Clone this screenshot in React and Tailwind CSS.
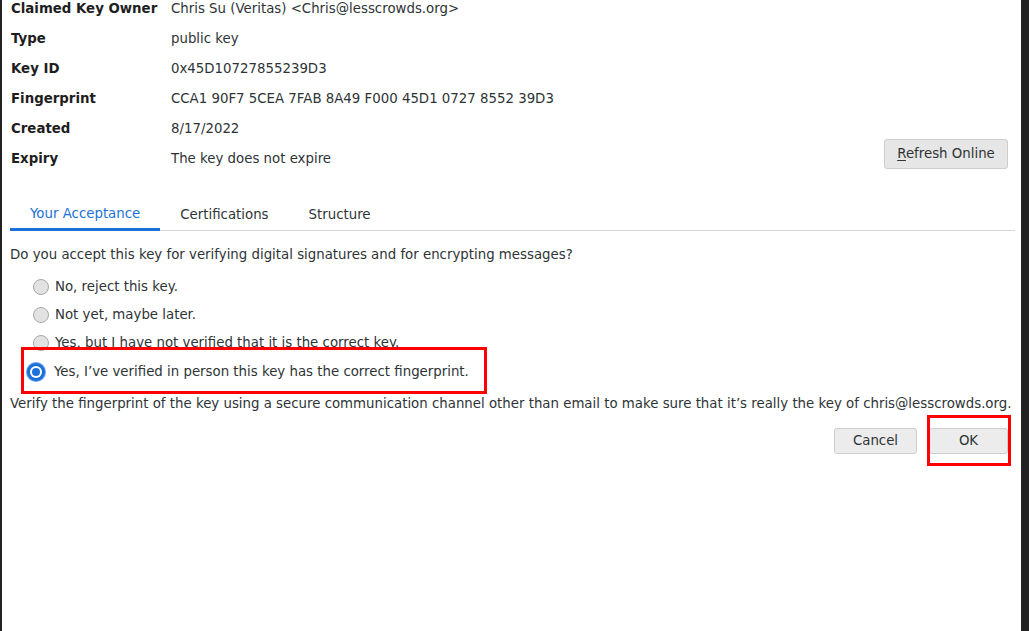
export default function App() {
  const rows = [
    ["Claimed Key Owner", "Chris Su (Veritas) <Chris@lesscrowds.org>"],
    ["Type", "public key"],
    ["Key ID", "0x45D10727855239D3"],
    ["Fingerprint", "CCA1 90F7 5CEA 7FAB 8A49 F000 45D1 0727 8552 39D3"],
    ["Created", "8/17/2022"],
    ["Expiry", "The key does not expire"],
  ];

  const options = [
    "No, reject this key.",
    "Not yet, maybe later.",
    "Yes, but I have not verified that it is the correct key.",
  ];

  return (
    <div
      className="flex h-[631px] w-[1029px] overflow-hidden bg-[#222222] text-[13.33px] text-[#2e3436]"
      style={{ fontFamily: '"DejaVu Sans", "Noto Sans", sans-serif' }}
    >
      {/* Dialog body */}
      <div className="relative ml-[2px] flex w-[1019px] flex-col bg-white pl-[8px] pr-[9px]">
        {/* Key details */}
        <div className="-mt-[6px] flex items-end justify-between">
          <div className="flex flex-col">
            {rows.map(([label, value]) => (
              <div key={label} className="flex h-[30px] items-center">
                <span className="w-[161px] pl-[1px] font-bold text-[#1e1e1e]">{label}</span>
                <span>{value}</span>
              </div>
            ))}
          </div>
          <button className="mr-[4px] mb-[5px] h-[30px] w-[124px] rounded-[3px] border border-[#cdcdcd] bg-[#e6e6e6] text-[#2e3436]">
            <span className="underline underline-offset-2">R</span>efresh Online
          </button>
        </div>

        {/* Tabs */}
        <div className="mt-[23px] mr-[-3px] flex h-[34px] border-b border-[#d6d6d6]">
          <div className="-mb-px flex items-center border-b-[3px] border-[#1c71d8] px-5 pt-[3px] text-[#1c71d8]">
            Your Acceptance
          </div>
          <div className="flex items-center px-5 pt-[3px]">Certifications</div>
          <div className="flex items-center px-5 pt-[3px]">Structure</div>
        </div>

        {/* Acceptance */}
        <p className="mt-[15px] leading-[18px]">
          Do you accept this key for verifying digital signatures and for encrypting messages?
        </p>

        <div className="mt-[14px] flex flex-col gap-[10px] pl-[23px]">
          {options.map((o) => (
            <label key={o} className="flex h-[18px] items-center gap-[6px]">
              <span className="h-[16px] w-[16px] rounded-full border border-[#a8a8a8] bg-[#e2e2e2]" />
              <span>{o}</span>
            </label>
          ))}
          <label className="mt-[1px] flex h-[18px] items-center gap-[8px]">
            <span className="-ml-[7px] flex h-[20px] w-[20px] items-center justify-center rounded-full bg-[#62a0ea]">
              <span className="flex h-[18px] w-[18px] items-center justify-center rounded-full bg-[#1c71d8]">
                <span className="flex h-[12px] w-[12px] items-center justify-center rounded-full bg-white">
                  <span className="h-[8px] w-[8px] rounded-full bg-[#1c71d8]" />
                </span>
              </span>
            </span>
            <span>Yes, I’ve verified in person this key has the correct fingerprint.</span>
          </label>
        </div>

        <p className="mt-[14px] leading-[18px]">
          Verify the fingerprint of the key using a secure communication channel other than email to make sure that it’s really the key of chris@lesscrowds.org.
        </p>

        {/* Buttons */}
        <div className="mt-[15px] flex justify-end gap-[12px] pr-[4px]">
          <button className="h-[26px] w-[83px] rounded-[3px] border border-[#cdcdcd] bg-[#ececec]">Cancel</button>
          <button className="h-[26px] w-[79px] rounded-[3px] border border-[#cdcdcd] bg-[#ececec]">OK</button>
        </div>

        {/* Annotation boxes */}
        <div className="pointer-events-none absolute left-[19px] top-[347px] h-[47px] w-[466px] border-[3px] border-[#ff0000]" />
        <div className="pointer-events-none absolute left-[925px] top-[415px] h-[51px] w-[84px] border-[3px] border-[#ff0000]" />
      </div>
    </div>
  );
}
